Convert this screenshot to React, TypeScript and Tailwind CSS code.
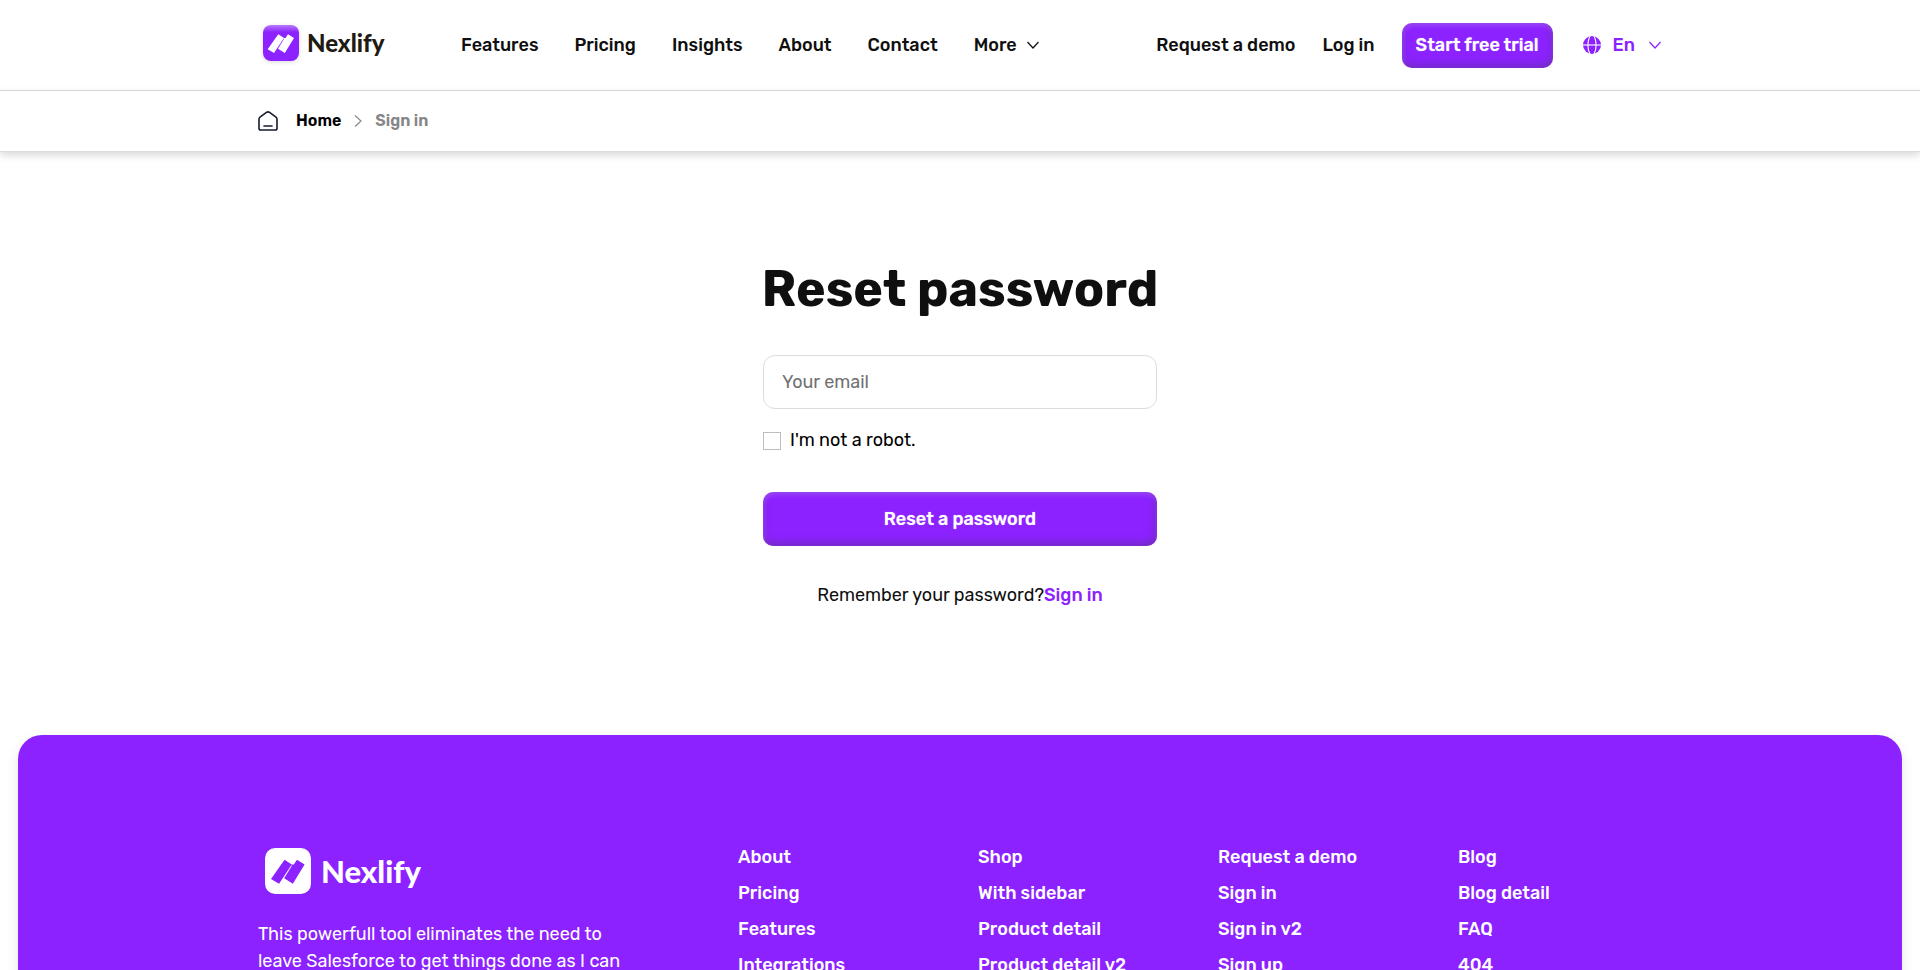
import { useId } from "react";

const navLinks = ["Features", "Pricing", "Insights", "About", "Contact"];

const footerColumns = [
  ["About", "Pricing", "Features", "Integrations"],
  ["Shop", "With sidebar", "Product detail", "Product detail v2"],
  ["Request a demo", "Sign in", "Sign in v2", "Sign up"],
  ["Blog", "Blog detail", "FAQ", "404"],
];

const raised =
  "bg-[#8c22ff] font-medium text-white shadow-[inset_1px_3px_5px_rgba(255,255,255,0.16),inset_-1px_-3px_8px_rgba(70,60,90,0.4)] text-shadow-[0_0_1px_rgba(255,255,255,0.6)]";

function LogoMark({ inverted = false, className }: { inverted?: boolean; className: string }) {
  const gradient = useId();
  return (
    <svg viewBox="0 0 36 36" className={className} aria-hidden="true">
      <defs>
        <linearGradient id={gradient} x1="0" y1="0" x2="0" y2="1">
          <stop offset="0" stopColor="#b77bff" />
          <stop offset="0.2" stopColor="#8c22ff" />
        </linearGradient>
      </defs>
      <rect width="36" height="36" rx="8" fill={inverted ? "#fff" : `url(#${gradient})`} />
      <g fill={inverted ? "#8c22ff" : "#fff"}>
        <path d="M15.300 9.200 21 12.900 11 27.900 4.700 24.200Z" />
        <path d="M25 9.200 31 12.900 21.800 27.900 15 23.700 20.800 14.200 20.800 12.900 22.600 12.900Z" />
      </g>
    </svg>
  );
}

function Chevron({ className }: { className: string }) {
  return (
    <svg viewBox="0 0 12 12" className={className} fill="none" stroke="currentColor" strokeWidth="1.2" aria-hidden="true">
      <path d="M0.5 3 6 9l5.500-6" />
    </svg>
  );
}

function Globe() {
  return (
    <svg viewBox="0 0 18 18" className="size-[18px]" aria-hidden="true">
      <circle cx="9" cy="9" r="9" fill="currentColor" />
      <g fill="none" stroke="#fff" strokeWidth="1.1">
        <path d="M0 9h18" />
        <path d="M7 0C4.200 5 4.200 13 7 18" />
        <path d="M11 0c2.800 5 2.800 13 0 18" />
      </g>
    </svg>
  );
}

function HomeIcon() {
  return (
    <svg viewBox="0 0 20 20" className="size-5" fill="none" stroke="#161a2c" strokeWidth="1.6" strokeLinecap="round" strokeLinejoin="round" aria-hidden="true">
      <path d="M1 8.200Q1 7 2 6.200L8.800 1.200Q10 .5 11.200 1.200L18 6.200Q19 7 19 8.200V17.200Q19 19 17.200 19H2.800Q1 19 1 17.200Z" />
      <path d="M6 15h8" />
    </svg>
  );
}

export default function App() {
  return (
    <div className="min-h-screen bg-white font-['Rubik','Inter',sans-serif] text-base text-[#0f0f0f]">
      <header className="border-b border-[#dcdcdc]">
        <div className="mx-auto flex h-[90px] max-w-[1440px] items-center justify-between px-[18px]">
          <div className="flex items-center">
            <a href="#home" className="ml-[5px] flex w-[198px] items-center gap-2 pb-1">
              <LogoMark className="size-9 drop-shadow-sm" />
              <span className="font-['Lato',sans-serif] text-2xl font-black text-[#1f1a12]">Nexlify</span>
            </a>
            <nav className="flex items-center gap-9 text-lg font-medium">
              {navLinks.map((link) => (
                <a key={link} href={`#${link.toLowerCase()}`}>
                  {link}
                </a>
              ))}
              <button type="button" className="flex items-center gap-2.5">
                More
                <Chevron className="size-3" />
              </button>
            </nav>
          </div>
          <div className="flex items-center pr-px text-lg font-medium">
            <a href="#demo">Request a demo</a>
            <a href="#login" className="ml-[27px]">
              Log in
            </a>
            <a href="#trial" className={`ml-[27px] flex h-[45px] items-center rounded-[10px] px-3.5 ${raised}`}>
              Start free trial
            </a>
            <button type="button" className="ml-[30px] flex items-center gap-3 text-[#8c22ff]">
              <Globe />
              En
              <Chevron className="ml-0.5 size-3" />
            </button>
          </div>
        </div>
      </header>
      <div className="border-b border-[#dcdcdc] shadow-[0_3px_8px_rgba(0,0,0,0.16)]">
        <nav aria-label="Breadcrumb" className="mx-auto flex h-[60px] max-w-[1440px] items-center px-[18px] text-base font-semibold">
          <a href="#home" className="flex items-center gap-[18px] text-black">
            <HomeIcon />
            Home
          </a>
          <Chevron className="mx-[11px] size-3 -rotate-90 text-[#8a8a8a]" />
          <span className="text-[#868686]">Sign in</span>
        </nav>
      </div>

      <main className="flex flex-col items-center pt-[107px] pb-[126px]">
        <h1 className="text-[50px] leading-[60px] font-bold whitespace-nowrap">Reset password</h1>
        <form className="mt-9 flex w-full max-w-[394px] flex-col" onSubmit={(event) => event.preventDefault()}>
          <input
            type="email"
            aria-label="Your email"
            placeholder="Your email"
            className="h-[54px] rounded-xl border border-[#dcdcdc] px-[18px] text-lg placeholder:text-[#717171]"
          />
          <label className="mt-[18px] flex items-center gap-[9px] text-lg leading-[27px] text-black">
            <input type="checkbox" className="size-[18px] appearance-none border border-[#bdbdbd] checked:bg-[#8c22ff]" />
            I'm not a robot.
          </label>
          <button type="submit" className={`mt-[38px] h-[54px] rounded-[10px] text-lg ${raised}`}>
            Reset a password
          </button>
        </form>
        <p className="mt-9 text-lg leading-[27px]">
          Remember your password?
          <a href="#signin" className="font-medium text-[#8c22ff]">
            Sign in
          </a>
        </p>
      </main>

      <footer className="mx-[18px] rounded-t-3xl bg-[#8c22ff] text-lg text-white shadow-[0_4px_12px_rgba(0,0,0,0.1)]">
        <div className="mx-auto grid max-w-[1440px] grid-cols-6 pt-[109px]">
          <div className="col-span-2 px-[18px]">
            <a href="#home" className="ml-[7px] flex h-[54px] items-center gap-2.5">
              <LogoMark inverted className="size-[46px]" />
              <span className="font-['Lato',sans-serif] text-[31px] font-black">Nexlify</span>
            </a>
            <p className="mt-[23px] max-w-[370px] leading-[27px]">
              This powerfull tool eliminates the need to leave Salesforce to get things done as I can
            </p>
          </div>
          {footerColumns.map((column) => (
            <ul key={column[0]} className="flex flex-col gap-[9px] px-[18px] leading-[27px] font-medium">
              {column.map((item) => (
                <li key={item}>
                  <a href={`#${item.toLowerCase().replaceAll(" ", "-")}`}>{item}</a>
                </li>
              ))}
            </ul>
          ))}
        </div>
      </footer>
    </div>
  );
}
